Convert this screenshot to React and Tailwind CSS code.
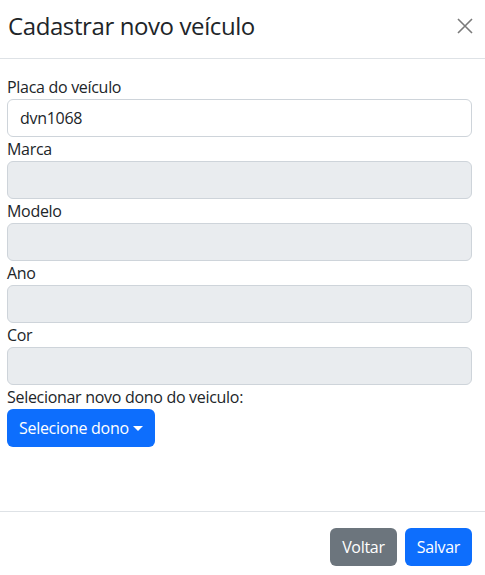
const fields = ['Marca', 'Modelo', 'Ano', 'Cor'];

const App = () => {
    return (
        <div className="w-[485px] bg-white text-[#212529] font-['Open_Sans',sans-serif]">
            <div className="flex items-center justify-between h-[59px] pl-2 pr-[12px] border-b border-[#dee2e6]">
                <h4 className="text-[24px] leading-[36px] font-medium tracking-[-0.4px] -mt-[6px]">Cadastrar novo veículo</h4>
                <button className="w-4 h-4 -mt-[6px] text-[#7a7a7a]" aria-label="Fechar">
                    <svg viewBox="0 0 16 16" className="w-4 h-4" fill="none" stroke="currentColor" strokeWidth="1.6">
                        <path d="M1 1 L15 15 M15 1 L1 15" />
                    </svg>
                </button>
            </div>

            <div className="pt-4 pb-16 pl-[7px] pr-[13px] text-[16px] leading-6 tracking-[-0.3px]">
                <label className="block">Placa do veículo</label>
                <input
                    type="text"
                    defaultValue="dvn1068"
                    className="block w-full h-[38px] px-3 border border-[#ced4da] rounded-[6px] bg-white outline-none tracking-[-0.3px]"
                />
                {fields.map((f) => (
                    <div key={f}>
                        <label className="block">{f}</label>
                        <input
                            type="text"
                            disabled
                            className="block w-full h-[38px] px-3 border border-[#ced4da] rounded-[6px] bg-[#e9ecef]"
                        />
                    </div>
                ))}
                <label className="block">Selecionar novo dono do veiculo:</label>
                <button className="flex items-center h-[38px] px-3 rounded-[6px] bg-[#0d6efd] text-white">
                    Selecione dono
                    <span className="ml-[4px] border-t-[5px] border-x-[5px] border-x-transparent border-t-white" />
                </button>
            </div>

            <div className="flex justify-end gap-2 pt-4 pb-4 pr-[13px] border-t border-[#dee2e6] text-[16px] tracking-[-0.3px]">
                <button className="h-[38px] px-3 rounded-[6px] bg-[#6c757d] text-white">Voltar</button>
                <button className="h-[38px] px-3 rounded-[6px] bg-[#0d6efd] text-white">Salvar</button>
            </div>
        </div>
    );
};

export default App;
